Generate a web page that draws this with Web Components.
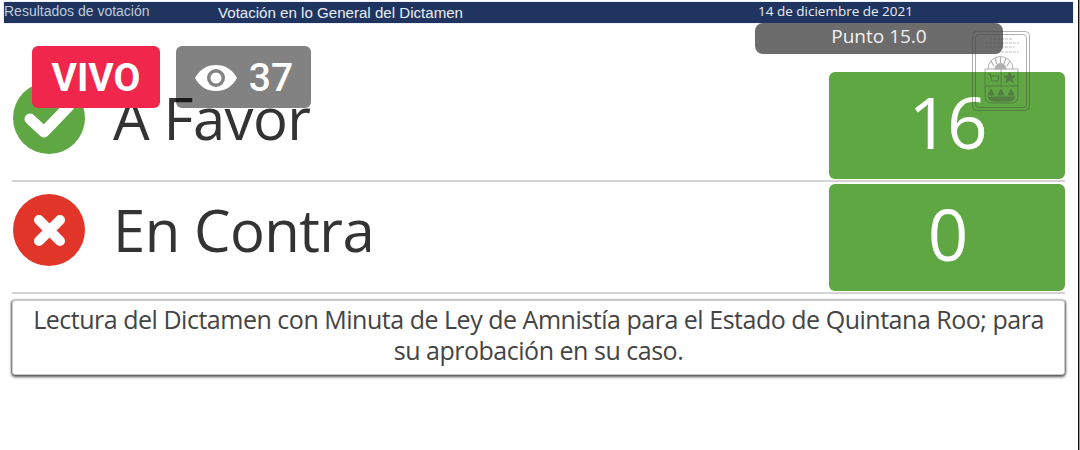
<!DOCTYPE html>
<html>
<head>
<meta charset="utf-8">
<style>
  html, body { margin: 0; padding: 0; background: #fff; }
  body { width: 1080px; height: 450px; overflow: hidden; position: relative; font-family: "Open Sans", sans-serif; }
</style>
</head>
<body>
<vote-screen></vote-screen>

<script>
class TopBanner extends HTMLElement {
    constructor() {
        super();
        this.attachShadow({mode: "open"}).innerHTML = `
            <style>
                :host {
                    display: grid;
                    grid-template-columns: 214px 540px 1fr;
                    height: 21px;
                    margin: 2px 7px 0 4px;
                    background: #1f3560;
                    color: #e9edf3;
                    font: 14px/18px "Liberation Sans", sans-serif;
                    box-shadow: 0 0 1px #8aa0c0;
                }
                .a { color: #bfcbdb; }
                .b { font-size: 15.1px; line-height: 22px; }
                .c { font-family: "Open Sans", sans-serif; font-size: 13.5px; }
            </style>
            <div class="a">Resultados de votación</div>
            <div class="b">Votación en lo General del Dictamen</div>
            <div class="c">14 de diciembre de 2021</div>`;
    }
}

class PointPill extends HTMLElement {
    constructor() {
        super();
        this.attachShadow({mode: "open"}).innerHTML = `
            <style>
                :host {
                    display: flex;
                    justify-content: center;
                    width: 248px;
                    height: 31px;
                    margin: 0 0 18px 755px;
                    box-sizing: border-box;
                    background: #6c6c6c;
                    border-radius: 8px;
                    color: #f2f2f2;
                    font: 19px/26px "Open Sans", sans-serif;
                }
            </style>
            <slot></slot>`;
    }
}

class VoteRow extends HTMLElement {
    constructor() {
        super();
        this.attachShadow({mode: "open"}).innerHTML = `
            <style>
                :host {
                    display: flex;
                    align-items: center;
                    height: 110px;
                    margin: 0 15px 2px 12px;
                    box-sizing: border-box;
                    padding-bottom: 1px;
                    border-bottom: 2px solid #d4d4d4;
                }
                .icon { width: 74px; height: 74px; margin: 0 27px 15px 0; flex: none; }
                .label {
                    flex: 1;
                    margin-bottom: 16px;
                    font: 58px/1 "Open Sans", sans-serif;
                    color: #333;
                    letter-spacing: -.6px;
                }
                .count {
                    width: 236px;
                    height: 107px;
                    box-sizing: border-box;
                    padding-bottom: 9px;
                    display: flex;
                    align-items: center;
                    justify-content: center;
                    background: #5fa743;
                    border-radius: 6px;
                    color: #fff;
                    font: 71px/1 "Open Sans", sans-serif;
                    letter-spacing: -2px;
                }
            </style>
            <div class="icon"><slot name="icon"></slot></div>
            <div class="label"><slot name="label"></slot></div>
            <div class="count"><slot name="count"></slot></div>`;
    }
}

class NoteBox extends HTMLElement {
    constructor() {
        super();
        this.attachShadow({mode: "open"}).innerHTML = `
            <style>
                :host {
                    display: block;
                    margin: 6px 15px 0 12px;
                    height: 75px;
                    box-sizing: border-box;
                    padding: 3px 10px 0;
                    background: #fff;
                    border: 1px solid #c9c9c9;
                    border-radius: 3px;
                    box-shadow: 0 2px 3px #555, -1px 0 2px #888, 1px 0 2px #888;
                    text-align: center;
                    color: #444;
                    font: 25px/31px "Open Sans", sans-serif;
                    letter-spacing: -.48px;
                }
            </style>
            <slot></slot>`;
    }
}

class LiveBadges extends HTMLElement {
    constructor() {
        super();
        this.attachShadow({mode: "open"}).innerHTML = `
            <style>
                :host {
                    position: absolute;
                    left: 32px;
                    top: 46px;
                    display: flex;
                    gap: 16px;
                    color: #fff;
                    font: 700 39px/1 "Roboto", sans-serif;
                }
                div {
                    height: 62px;
                    box-sizing: border-box;
                    padding-top: 2px;
                    display: flex;
                    align-items: center;
                    justify-content: center;
                    border-radius: 6px;
                }
                .live { width: 128px; background: #f0264c; }
                .views { width: 135px; background: rgba(0,0,0,.49); gap: 11px; font-weight: 500; }
                svg { width: 44px; height: 30px; }
            </style>
            <div class="live">VIVO</div>
            <div class="views">
                <svg viewBox="0 0 44 30"><path fill-rule="evenodd" d="M1 15C6 6 13 2 22 2s16 4 21 13c-5 9-12 13-21 13S6 24 1 15zM22 6a9 9 0 1 0 0 18 9 9 0 0 0 0-18z" fill="#fff"/><circle cx="22" cy="15" r="5.500" fill="#fff"/></svg>
                <span>37</span>
            </div>`;
    }
}

class StateSeal extends HTMLElement {
    constructor() {
        super();
        this.attachShadow({mode: "open"}).innerHTML = `
            <style>
                :host { position: absolute; left: 971px; top: 30px; width: 60px; height: 82px; opacity: .42; }
                svg { display: block; width: 100%; height: 100%; }
            </style>
            <svg viewBox="0 0 60 82" fill="none" stroke="#444" stroke-width="1">
                <rect x="1.500" y="1.500" width="57" height="79" rx="4"/>
                <rect x="4.500" y="4.500" width="51" height="73" rx="3"/>
                <path d="M18 9h24M14 13h34M14 17h30M26 22h22" stroke-width=".8" stroke-dasharray="3 1"/>
                <path d="M17 39a12.500 12.500 0 0 1 25 0" stroke-width="1"/>
                <path d="M29.500 27v6M24 28l2 6M35 28l-2 6M20 31l3 5M39 31l-3 5" stroke-width="1.200"/>
                <path d="M24 39a5.500 5.500 0 0 1 11 0z" fill="#444"/>
                <path d="M14 39h33v26c0 6-3 8-7 8H21c-4 0-7-2-7-8z"/>
                <path d="M30 39v17M14 56h33"/>
                <path d="M17 44h2l2 7h6l1-5h-9M21 53h.5M26 53h.5" stroke-width="1.200"/>
                <path d="M38.500 42l1.500 4h4l-3 2.500 1 4-3.500-2.500-3.500 2.500 1-4-3-2.500h4z" fill="#444"/>
                <path d="M20 59l3 6h-6zM30 59l3 6h-6zM40 59l3 6h-6z" fill="#444"/>
                <path d="M17 67h27c-1 3-4 4-7 4H24c-3 0-6-1-7-4z" fill="#444"/>
            </svg>`;
    }
}

class VoteScreen extends HTMLElement {
    constructor() {
        super();
        this.attachShadow({mode: "open"}).innerHTML = `
            <style>
                :host { display: block; }
                svg { display: block; width: 74px; height: 74px; }
                .edge { position: absolute; left: 1078px; top: 0; bottom: 0; width: 1px; background: #111; box-shadow: 1px 0 0 #999; }
            </style>
            <top-banner></top-banner>
            <point-pill>Punto 15.0</point-pill>
            <vote-row>
                <svg slot="icon" viewBox="0 0 74 74"><circle cx="37" cy="37" r="36" fill="#5fa743"/><path d="M18 38l14 13 25-26" fill="none" stroke="#fff" stroke-width="11" stroke-linecap="round" stroke-linejoin="round"/></svg>
                <span slot="label">A Favor</span>
                <span slot="count">16</span>
            </vote-row>
            <vote-row>
                <svg slot="icon" viewBox="0 0 74 74"><circle cx="37" cy="37" r="36" fill="#e2352a"/><path d="M27 27l21 21M48 27L27 48" fill="none" stroke="#fff" stroke-width="10" stroke-linecap="round"/></svg>
                <span slot="label">En Contra</span>
                <span slot="count">0</span>
            </vote-row>
            <note-box>Lectura del Dictamen con Minuta de Ley de Amnistía para el Estado de Quintana Roo; para su aprobación en su caso.</note-box>
            <live-badges></live-badges>
            <state-seal></state-seal>
            <div class="edge"></div>`;
    }
}

customElements.define("top-banner", TopBanner);
customElements.define("point-pill", PointPill);
customElements.define("vote-row", VoteRow);
customElements.define("note-box", NoteBox);
customElements.define("live-badges", LiveBadges);
customElements.define("state-seal", StateSeal);
customElements.define("vote-screen", VoteScreen);
</script>
</body>
</html>
